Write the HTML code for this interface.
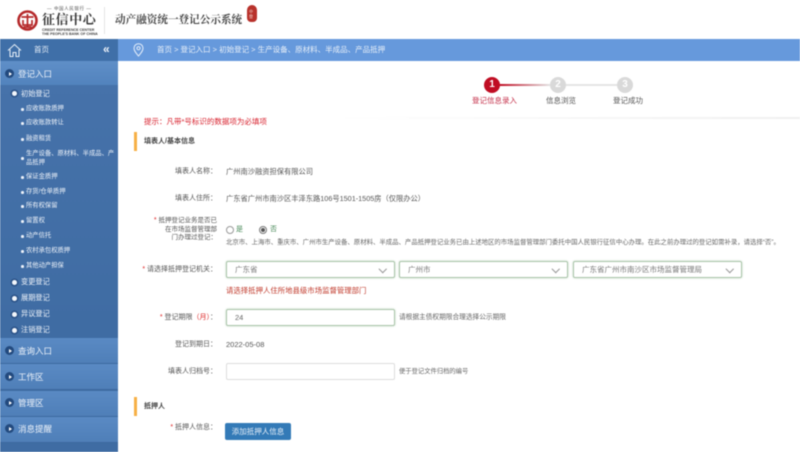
<!DOCTYPE html>
<html lang="zh"><head><meta charset="utf-8"><style>
html,body{margin:0;padding:0;background:#fff}
body{width:800px;height:452px;overflow:hidden;position:relative;font-family:"Liberation Sans","Noto Sans CJK SC",sans-serif;color:#555}
#w{position:absolute;left:0;top:0;width:800px;height:452px;overflow:hidden;filter:blur(.6px)}
#w div{position:absolute;white-space:nowrap}
.s{font-size:6.3px;color:#eef3fa;line-height:10px}
.b{width:2.5px;height:2.5px;border-radius:50%;background:#eef3fa}
.d{left:12px;width:5px;height:5px;border-radius:50%;background:#f2f6fb;box-shadow:0 0 0 1.5px #2a5288}
.m{left:21px;font-size:7.2px;color:#eef3fa;line-height:10px}
.g{left:0;width:118px;height:25px;background:linear-gradient(#5a8ac4,#4f7fb8);border-bottom:1px solid #3d6a9f}
.gd{left:5px;width:9px;height:9px;border-radius:50%;background:#234a7e}
.gd:after{content:"";position:absolute;left:3.5px;top:2.5px;border-left:3px solid #fff;border-top:2px solid transparent;border-bottom:2px solid transparent}
.t{font-size:8.5px;color:#eef3fa;line-height:12px;left:18px}
.l{font-size:7px;color:#555;line-height:10px;text-align:right;right:583px}
.v{font-size:7.25px;color:#555;line-height:10px;left:226px}
.r{color:#d22;font-size:7px}
.sel{height:15px;top:261px;border:1px solid #a9c4a9;border-radius:2px;background:#fff;font-size:7.5px;line-height:15px;color:#777;box-shadow:0 0 2px #c4d8c4}
.sel i{position:absolute;right:9px;top:3.5px;width:4.5px;height:4.5px;border-right:1px solid #999;border-bottom:1px solid #999;transform:rotate(45deg)}
.c{width:16px;height:16px;border-radius:50%;text-align:center;line-height:16px;font-size:10px;font-weight:bold;color:#fff;background:#d9d9d9;top:77px}
.st{font-size:7.5px;top:96px;line-height:10px;color:#555}
</style></head><body><div id="w">

<!-- logo -->
<svg style="position:absolute;left:17px;top:10px" width="21" height="21" viewBox="0 0 21 21"><circle cx="10.5" cy="10.5" r="9" fill="none" stroke="#b5282a" stroke-width="2.6"/><path d="M4.5 7H16.5M10.5 4V17M6 10V15H15V10M6.5 17H14.5" fill="none" stroke="#b5282a" stroke-width="1.7"/></svg>
<div style="left:42px;top:12px;font:bold 13px/16px 'Liberation Serif','Noto Serif CJK SC',serif;letter-spacing:.6px;color:#3a3a3a">征信中心</div>
<div style="left:47px;top:6px;font-size:4.5px;line-height:6px;letter-spacing:.6px;color:#555">— 中国人民银行 —</div>
<div style="left:42px;top:28px;width:60px;font-size:3.6px;line-height:4px;color:#444;font-weight:bold">CREDIT REFERENCE CENTER<br>THE PEOPLE'S BANK OF CHINA</div>
<div style="left:104px;top:7px;width:1px;height:27px;background:#e4e4e4"></div>
<div style="left:115px;top:14px;font:bold 10.6px/14px 'Liberation Serif','Noto Serif CJK SC',serif;color:#444">动产融资统一登记公示系统</div>
<div style="left:247px;top:5px;width:10px;height:17px;border-radius:5px 5px 4px 4px;background:#b8312b"></div>
<div style="left:249px;top:9px;font-size:4px;line-height:5px;color:#f4d8d0">中<br>登</div>

<!-- top bars -->
<div style="left:0;top:39px;width:118px;height:22px;background:#3f6fa8"></div>
<div style="left:118px;top:39px;width:682px;height:22px;background:#6699dc"></div>
<svg style="position:absolute;left:7px;top:43px" width="15" height="15" viewBox="0 0 15 15" fill="none" stroke="#e8f0f9" stroke-width="1"><path d="M1 7.5 7.5 1.5 14 7.5M3 6.5V13.5H6V9.5H9V13.5H12V6.5"/></svg>
<div style="left:34px;top:45px;font-size:7.5px;line-height:10px;color:#e8f0f9">首页</div>
<div style="left:103px;top:42px;font-size:12px;line-height:14px;color:#eef3fa;font-weight:bold">«</div>
<svg style="position:absolute;left:133px;top:43px" width="11" height="14" viewBox="0 0 11 14" fill="none" stroke="#e6effa" stroke-width="1"><path d="M5.5 13C3 10 1 7.8 1 5.2A4.5 4.5 0 0 1 10 5.2C10 7.8 8 10 5.5 13Z"/><circle cx="5.5" cy="5.2" r="1.6"/></svg>
<div style="left:157px;top:45px;font-size:7.5px;line-height:10px;color:#e8f0f9">首页 &gt; 登记入口 &gt; 初始登记 &gt; 生产设备、原材料、半成品、产品抵押</div>

<!-- sidebar -->
<div style="left:0;top:61px;width:118px;height:391px;background:#3f6ca3"></div>
<div style="left:0;top:61px;width:118px;height:24px;background:linear-gradient(#5f8fc8,#5283bd)"></div>
<div style="left:0;top:85px;width:118px;height:253px;background:linear-gradient(#4672aa,#3f6ca3)"></div>
<div class="gd" style="top:69px"></div><div class="t" style="top:68px">登记入口</div>
<div class="d" style="top:91px"></div><div class="m" style="top:89px">初始登记</div>
<div class="b" style="left:21px;top:108px"></div><div class="s" style="left:26px;top:104px">应收账款质押</div>
<div class="b" style="left:21px;top:122px"></div><div class="s" style="left:26px;top:118px">应收账款转让</div>
<div class="b" style="left:21px;top:138px"></div><div class="s" style="left:26px;top:134px">融资租赁</div>
<div class="b" style="left:21px;top:157px"></div><div class="s" style="left:26px;top:149px;line-height:9px">生产设备、原材料、半成品、产<br>品抵押</div>
<div class="b" style="left:21px;top:176px"></div><div class="s" style="left:26px;top:172px">保证金质押</div>
<div class="b" style="left:21px;top:191px"></div><div class="s" style="left:26px;top:187px">存货/仓单质押</div>
<div class="b" style="left:21px;top:205px"></div><div class="s" style="left:26px;top:201px">所有权保留</div>
<div class="b" style="left:21px;top:220px"></div><div class="s" style="left:26px;top:216px">留置权</div>
<div class="b" style="left:21px;top:235px"></div><div class="s" style="left:26px;top:231px">动产信托</div>
<div class="b" style="left:21px;top:250px"></div><div class="s" style="left:26px;top:246px">农村承包权质押</div>
<div class="b" style="left:21px;top:265px"></div><div class="s" style="left:26px;top:261px">其他动产担保</div>
<div class="d" style="top:280px"></div><div class="m" style="top:277px">变更登记</div>
<div class="d" style="top:296px"></div><div class="m" style="top:293px">展期登记</div>
<div class="d" style="top:312px"></div><div class="m" style="top:309px">异议登记</div>
<div class="d" style="top:328px"></div><div class="m" style="top:325px">注销登记</div>
<div class="g" style="top:338px"></div><div class="gd" style="top:346px"></div><div class="t" style="top:345px">查询入口</div>
<div class="g" style="top:364px"></div><div class="gd" style="top:372px"></div><div class="t" style="top:371px">工作区</div>
<div class="g" style="top:391px"></div><div class="gd" style="top:398px"></div><div class="t" style="top:397px">管理区</div>
<div class="g" style="top:417px"></div><div class="gd" style="top:424px"></div><div class="t" style="top:423px">消息提醒</div>

<!-- steps -->
<div style="left:500px;top:84px;width:50px;height:2px;background:linear-gradient(90deg,#c00d23,#e4e4e4)"></div>
<div style="left:566px;top:84px;width:51px;height:2px;background:#e4e4e4"></div>
<div class="c" style="left:484px;background:#c00d23">1</div>
<div class="c" style="left:550px">2</div>
<div class="c" style="left:617px">3</div>
<div class="st" style="left:472px;color:#c4304a">登记信息录入</div>
<div class="st" style="left:546px">信息浏览</div>
<div class="st" style="left:613px">登记成功</div>
<div style="left:340px;top:117px;width:460px;height:2px;background:linear-gradient(90deg,#fff,#f0f0f0)"></div>

<div style="left:144px;top:117px;font-size:7.5px;line-height:10px;color:#d8222e">提示：凡带*号标识的数据项为必填项</div>
<div style="left:134px;top:132px;width:3px;height:19px;background:#f7b045"></div>
<div style="left:144px;top:137px;font-size:7px;line-height:10px;font-weight:bold;color:#444">填表人/基本信息</div>

<!-- form -->
<div class="l" style="top:167px">填表人名称：</div>
<div class="v" style="top:167px">广州南沙融资担保有限公司</div>
<div class="l" style="top:194px">填表人住所：</div>
<div class="v" style="top:194px">广东省广州市南沙区丰泽东路106号1501-1505房（仅限办公）</div>
<div class="l" style="top:217px;line-height:8.5px;font-size:6.5px"><span class="r">*&nbsp;</span>抵押登记业务是否已<br>在市场监督管理部<br>门办理过登记：</div>
<div style="left:226px;top:226px;width:6px;height:6px;border:1px solid #999;border-radius:50%"></div>
<div style="left:236px;top:225px;font-size:7px;line-height:10px;color:#4a8a5a">是</div>
<div style="left:259px;top:226px;width:6px;height:6px;border:1px solid #777;border-radius:50%"></div>
<div style="left:261px;top:228px;width:4px;height:4px;background:#555;border-radius:50%"></div>
<div style="left:270px;top:225px;font-size:7px;line-height:10px;color:#4a8a5a">否</div>
<div style="left:226px;top:238px;font-size:6.4px;line-height:9px;color:#666">北京市、上海市、重庆市、广州市生产设备、原材料、半成品、产品抵押登记业务已由上述地区的市场监督管理部门委托中国人民银行征信中心办理。在此之前办理过的登记如需补录，请选择“否”。</div>
<div class="l" style="top:265px"><span class="r">*&nbsp;</span>请选择抵押登记机关：</div>
<div class="sel" style="left:226px;width:167px"><span style="margin-left:8px">广东省</span><i></i></div>
<div class="sel" style="left:399px;width:167px"><span style="margin-left:8px">广州市</span><i></i></div>
<div class="sel" style="left:573px;width:167px"><span style="margin-left:8px">广东省广州市南沙区市场监督管理局</span><i></i></div>
<div style="left:226px;top:286px;font-size:7.4px;line-height:10px;color:#c0392b">请选择抵押人住所地县级市场监督管理部门</div>
<div class="l" style="top:313px"><span class="r">*</span> 登记期限<span class="r">（月）</span>：</div>
<div style="left:226px;top:309px;width:167px;height:15px;border:1px solid #a9c4a9;border-radius:2px;font-size:7.5px;line-height:15px;color:#666;text-indent:8px;box-shadow:0 0 2px #c4d8c4">24</div>
<div style="left:399px;top:313px;font-size:6.7px;line-height:9px;color:#666">请根据主债权期限合理选择公示期限</div>
<div class="l" style="top:340px">登记到期日：</div>
<div class="v" style="top:340px;font-size:7.5px">2022-05-08</div>
<div class="l" style="top:367px">填表人归档号：</div>
<div style="left:226px;top:363px;width:167px;height:15px;border:1px solid #ddd;border-radius:2px"></div>
<div style="left:399px;top:367px;font-size:6.3px;line-height:9px;color:#666">便于登记文件归档的编号</div>
<div style="left:134px;top:397px;width:3px;height:19px;background:#f7b045"></div>
<div style="left:144px;top:402px;font-size:7px;line-height:10px;font-weight:bold;color:#444">抵押人</div>
<div class="l" style="top:423px"><span class="r">*&nbsp;</span>抵押人信息：</div>
<div style="left:225px;top:423px;width:66px;height:17px;border-radius:2px;background:#337ab7;color:#e8f0f9;font-size:7.5px;line-height:17px;text-align:center">添加抵押人信息</div>
</div></body></html>
